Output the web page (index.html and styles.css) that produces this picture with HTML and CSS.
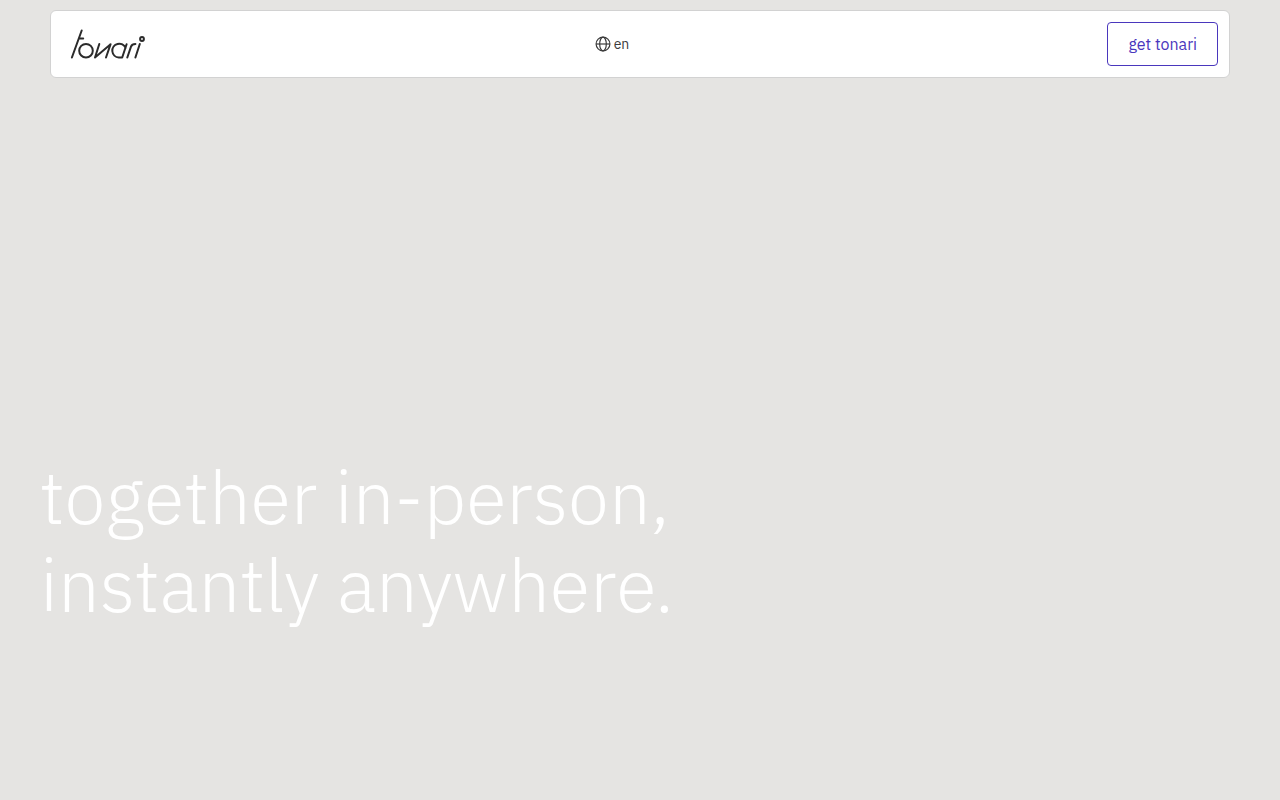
FILE: index.html
```html
<!DOCTYPE html>
<html lang="en">
<head>
    <meta charset="UTF-8">
    <meta name="viewport" content="width=device-width, initial-scale=1">
    <title>tonari</title>
    <link rel="stylesheet" href="styles.css">
</head>
<body>

    <header class="navbar">
        <a class="logo" href="#" aria-label="tonari">
            <svg width="76" height="32" viewBox="70 28 76 32" fill="none" stroke="#2b2b2b" stroke-width="2" stroke-linecap="round" stroke-linejoin="round">
                <path d="M71.9 57.5 81.7 30.5M78.8 38.4H83.2"/>
                <circle cx="86" cy="50.7" r="6.8"/>
                <path d="M99.3 44 95 57.5 110.6 44.2 106 57.5"/>
                <path d="M125.6 48A6.9 6.9 0 1 0 118.8 57.5H122.2L126.6 44.2"/>
                <path d="M127.3 57.5 131 46.6Q132 44 135.4 44"/>
                <path d="M139.8 44 135.4 57.5"/>
                <circle cx="142" cy="39" r="1.9"/>
            </svg>
        </a>

        <button class="lang" type="button">
            <svg width="16" height="16" viewBox="0 0 16 16" fill="none" stroke="#3c3c3c" stroke-width="1.2">
                <circle cx="8" cy="8" r="6.9"/>
                <ellipse cx="8" cy="8" rx="3.3" ry="6.9"/>
                <path d="M1 8h14"/>
            </svg>
            <span>en</span>
        </button>

        <a class="btn" href="#">get tonari</a>
    </header>

    <main class="hero">
        <h1>together in-person,<br>instantly anywhere.</h1>
    </main>

</body>
</html>
```

FILE: styles.css
```css
* {
    box-sizing: border-box;
}
body {
    margin: 0;
    min-height: 100vh;
    display: flex;
    flex-direction: column;
    background: #e5e4e2;
    font-family: "IBM Plex Sans", "Open Sans", sans-serif;
}
.navbar {
    margin: 10px 50px 0;
    padding: 11px;
    display: grid;
    grid-template-columns: 1fr auto 1fr;
    align-items: center;
    background: #fff;
    border: 1px solid #d2d2d2;
    border-radius: 6px;
}
.logo {
    margin-left: 8px;
    justify-self: start;
    display: flex;
}
.lang {
    margin-right: 56px;
    padding: 0;
    display: flex;
    align-items: center;
    gap: 3px;
    border: 0;
    background: none;
    color: #3c3c3c;
    font-family: inherit;
    font-size: 14px;
    line-height: 20px;
}
.btn {
    justify-self: end;
    padding: 9px 20px;
    border: 1px solid #4a37bd;
    border-radius: 4px;
    color: #4a37bd;
    font-size: 16px;
    line-height: 24px;
    text-decoration: none;
}
.hero {
    flex: 1;
    display: flex;
    align-items: flex-end;
    padding: 0 40px 172px;
}
.hero h1 {
    margin: 0;
    color: #fff;
    font-size: 74px;
    font-weight: 300;
    line-height: 88px;
}
```
